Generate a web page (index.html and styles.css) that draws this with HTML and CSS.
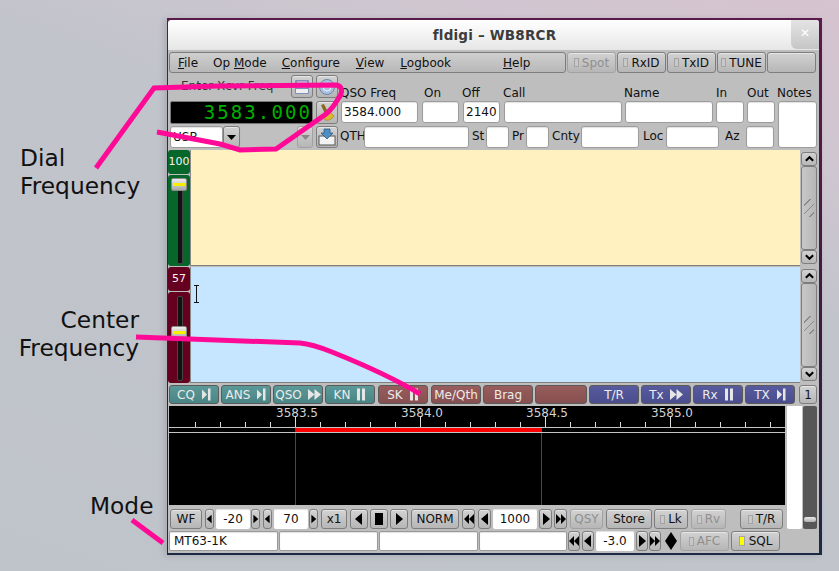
FILE: index.html
```html
<!DOCTYPE html>
<html lang="en">
<head>
    <meta charset="UTF-8">
    <meta name="viewport" content="width=device-width, initial-scale=1.0">
    <title>fldigi - WB8RCR</title>
    <link rel="stylesheet" href="styles.css">
</head>
<body>
    <svg class="defs" width="0" height="0">
        <symbol id="left" viewBox="0 0 10 12"><path d="M8 0v12L1 6z"/></symbol>
        <symbol id="right" viewBox="0 0 10 12"><path d="M2 0v12l7-6z"/></symbol>
        <symbol id="left2" viewBox="0 0 12 12"><path d="M6 0v12L0 6zM12 0v12L6 6z"/></symbol>
        <symbol id="right2" viewBox="0 0 12 12"><path d="M0 0v12l6-6zM6 0v12l6-6z"/></symbol>
        <symbol id="stop" viewBox="0 0 10 12"><path d="M1 0h8v12H1z"/></symbol>
        <symbol id="play-bar" viewBox="0 0 10 12"><path d="M1 1v10l5-5zM7 0h2.500v12H7z"/></symbol>
        <symbol id="play2" viewBox="0 0 12 12"><path d="M0 1v10l6-5zM6 1v10l6-5z"/></symbol>
        <symbol id="pause" viewBox="0 0 10 12"><path d="M1 0h3v12H1zM6 0h3v12H6z"/></symbol>
        <symbol id="up" viewBox="0 0 12 8"><path d="M2 6l4-4 4 4" fill="none" stroke="#000" stroke-width="2.200"/></symbol>
        <symbol id="down" viewBox="0 0 12 8"><path d="M2 2l4 4 4-4" fill="none" stroke="#000" stroke-width="2.200"/></symbol>
    </svg>

    <div class="label label-dial">Dial<br>Frequency</div>
    <div class="label label-center">Center<br>Frequency</div>
    <div class="label label-mode">Mode</div>

    <div class="window">
        <div class="titlebar">
            <span class="title">fldigi – WB8RCR</span>
            <div class="close">✕</div>
        </div>
        <div class="win-body">

            <div class="toolbar">
                <nav class="menu">
                    <span><u>F</u>ile</span>
                    <span>Op <u>M</u>ode</span>
                    <span><u>C</u>onfigure</span>
                    <span class="menu-view"><u>V</u>iew</span>
                    <span class="menu-log"><u>L</u>ogbook</span>
                    <span class="menu-help"><u>H</u>elp</span>
                </nav>
                <button class="btn tool off"><i class="led"></i>Spot</button>
                <button class="btn tool"><i class="led"></i>RxID</button>
                <button class="btn tool"><i class="led"></i>TxID</button>
                <button class="btn tool"><i class="led"></i>TUNE</button>
                <button class="btn tool"></button>
            </div>

            <div class="log">
                <div class="rig">
                    <div class="rig-row">
                        <span class="rig-label">Enter Xcvr Freq</span>
                        <button class="btn icon-btn">
                            <svg viewBox="0 0 18 18"><rect x="2" y="2" width="14" height="14" rx="1" fill="#7d8fb8"/><rect x="4" y="3" width="10" height="7" fill="#c9a3c8"/><rect x="3" y="11" width="12" height="4" fill="#eee"/></svg>
                        </button>
                        <button class="btn icon-btn">
                            <svg viewBox="0 0 18 18"><circle cx="9" cy="9" r="7.500" fill="#a9c1dd" stroke="#6f88aa"/><circle cx="9" cy="9" r="4" fill="none" stroke="#eef"/><path d="M2 9h14" stroke="#eef" fill="none"/></svg>
                        </button>
                    </div>
                    <div class="rig-row rig-freq">
                        <div class="freq">3583.000</div>
                        <button class="btn icon-btn">
                            <svg viewBox="0 0 18 18"><path d="M3 1l3-1 4 8-3 2z" fill="#8a6a20"/><path d="M6 11l5-4 5 5c-2 3-6 5-9 4z" fill="#e0b82c" stroke="#9a7a18" stroke-width=".6"/></svg>
                        </button>
                    </div>
                    <div class="rig-row rig-mode">
                        <input class="field mode-input" value="USB">
                        <button class="btn drop"><svg class="tri" viewBox="0 0 9 5"><path d="M0 0h9L4.500 5z"/></svg></button>
                        <div class="bw"></div>
                        <button class="btn drop small off"><svg class="tri" viewBox="0 0 9 5"><path d="M0 0h9L4.500 5z" fill="#888"/></svg></button>
                        <button class="btn icon-btn">
                            <svg viewBox="0 0 18 18"><rect x="1" y="8" width="16" height="9" fill="#f2f2f2" stroke="#555"/><path d="M6 1h6v4h3l-6 6-6-6h3z" fill="#4d8fc4" stroke="#26527a" stroke-width=".7"/></svg>
                        </button>
                    </div>
                </div>

                <div class="qso">
                    <div class="qso-fields">
                        <div class="row-labels">
                            <span class="w-qso">QSO Freq</span>
                            <span class="w-on lab-on">On</span>
                            <span class="w-off">Off</span>
                            <span class="w-call">Call</span>
                            <span class="w-name">Name</span>
                            <span class="w-in lab-in">In</span>
                            <span class="w-out lab-in">Out</span>
                        </div>
                        <div class="row-inputs">
                            <input class="field w-qso" value="3584.000">
                            <input class="field w-on">
                            <input class="field w-off" value="2140">
                            <input class="field w-call">
                            <input class="field w-name">
                            <input class="field w-in">
                            <input class="field w-out">
                        </div>
                        <div class="row-qth">
                            <label class="lab-qth">QTH</label><input class="field w-qth">
                            <label class="lab-st">St</label><input class="field w-st">
                            <label class="lab-pr">Pr</label><input class="field w-pr">
                            <label class="lab-cnty">Cnty</label><input class="field w-cnty">
                            <label class="lab-loc">Loc</label><input class="field w-loc">
                            <label class="lab-az">Az</label><input class="field w-out">
                        </div>
                    </div>
                    <div class="notes">
                        <span>Notes</span>
                        <textarea class="field notes-box"></textarea>
                    </div>
                </div>
            </div>

            <div class="panes">
                <div class="pane-row">
                    <div class="level green">
                        <div class="level-value">100</div>
                        <div class="level-slide"><div class="thumb thumb-tx"></div></div>
                    </div>
                    <div class="pane pane-rx"></div>
                    <div class="scrollbar">
                        <div class="sb-btn"><svg><use href="#up"/></svg></div>
                        <div class="sb-thumb"></div>
                        <div class="sb-btn"><svg><use href="#down"/></svg></div>
                    </div>
                </div>
                <div class="pane-row">
                    <div class="level maroon">
                        <div class="level-value">57</div>
                        <div class="level-slide"><div class="thumb thumb-rx"></div></div>
                    </div>
                    <div class="pane pane-tx">
                        <svg class="ibeam" width="7" height="18" viewBox="0 0 7 18"><path d="M1 .5h5M3.500.5v17M1 17.500h5" stroke="#111" fill="none"/></svg>
                    </div>
                    <div class="scrollbar">
                        <div class="sb-btn"><svg><use href="#up"/></svg></div>
                        <div class="sb-thumb"></div>
                        <div class="sb-btn"><svg><use href="#down"/></svg></div>
                    </div>
                </div>
            </div>

            <div class="macros">
                <button class="btn macro teal">CQ <svg><use href="#play-bar"/></svg></button>
                <button class="btn macro teal">ANS <svg><use href="#play-bar"/></svg></button>
                <button class="btn macro teal">QSO <svg class="wide"><use href="#play2"/></svg></button>
                <button class="btn macro teal">KN <svg><use href="#pause"/></svg></button>
                <button class="btn macro red sp">SK <svg><use href="#pause"/></svg></button>
                <button class="btn macro red sp">Me/Qth</button>
                <button class="btn macro red">Brag</button>
                <button class="btn macro red w-blank"></button>
                <button class="btn macro blue">T/R</button>
                <button class="btn macro blue">Tx <svg class="wide"><use href="#play2"/></svg></button>
                <button class="btn macro blue">Rx <svg><use href="#pause"/></svg></button>
                <button class="btn macro blue">TX <svg><use href="#play-bar"/></svg></button>
                <button class="btn macro-page">1</button>
            </div>

            <div class="lower">
                <div class="lower-main">
                    <div class="waterfall">
                        <svg width="616" height="99" viewBox="0 0 616 99">
                            <g class="scale-text">
                                <text x="128" y="11" text-anchor="middle">3583.5</text>
                                <text x="253" y="11" text-anchor="middle">3584.0</text>
                                <text x="378" y="11" text-anchor="middle">3584.5</text>
                                <text x="503" y="11" text-anchor="middle">3585.0</text>
                            </g>
                            <path d="M26.500 16v5M51.500 16v5M76.500 16v5M101.500 16v5M126.500 11v10M151.500 16v5M176.500 16v5M201.500 16v5M226.500 16v5M251.500 11v10M276.500 16v5M301.500 16v5M326.500 16v5M351.500 16v5M376.500 11v10M401.500 16v5M426.500 16v5M451.500 16v5M476.500 16v5M501.500 11v10M526.500 16v5M551.500 16v5M576.500 16v5M601.500 16v5" stroke="#ddd" fill="none"/>
                            <path d="M0 21.500h616M0 26.500h616" stroke="#c4c4c4" fill="none"/>
                            <rect x="126" y="22" width="247" height="4" fill="#f00"/>
                            <path d="M126.500 27v72M372.500 27v72" stroke="#a82020" fill="none"/>
                        </svg>
                    </div>
                    <div class="controls">
                        <button class="btn w-wf">WF</button>
                        <button class="btn arrow sp"><svg><use href="#left"/></svg></button>
                        <div class="value w-20">-20</div>
                        <button class="btn arrow tight"><svg><use href="#right"/></svg></button>
                        <button class="btn arrow sp"><svg><use href="#left"/></svg></button>
                        <div class="value w-20">70</div>
                        <button class="btn arrow tight"><svg><use href="#right"/></svg></button>
                        <button class="btn w-x1 sp">x1</button>
                        <button class="btn transport sp"><svg><use href="#left"/></svg></button>
                        <button class="btn transport"><svg><use href="#stop"/></svg></button>
                        <button class="btn transport"><svg><use href="#right"/></svg></button>
                        <button class="btn w-norm sp">NORM</button>
                        <button class="btn step sp"><svg><use href="#left2"/></svg></button>
                        <button class="btn step sp"><svg><use href="#left"/></svg></button>
                        <div class="value w-1000">1000</div>
                        <button class="btn step"><svg><use href="#right"/></svg></button>
                        <button class="btn step"><svg><use href="#right2"/></svg></button>
                        <button class="btn w-qsy sp off">QSY</button>
                        <button class="btn w-store sp">Store</button>
                        <button class="btn w-lk"><i class="led"></i>Lk</button>
                        <button class="btn w-rv off sp"><i class="led"></i>Rv</button>
                        <button class="btn w-tr"><i class="led"></i>T/R</button>
                    </div>
                </div>
                <div class="wf-white"></div>
                <div class="wf-slider"><div class="wf-thumb"></div></div>
            </div>

            <div class="status">
                <div class="cell w-mode">MT63-1K</div>
                <div class="cell w-c2"></div>
                <div class="cell w-c2"></div>
                <div class="cell w-c4"></div>
                <button class="btn step-s"><svg><use href="#left2"/></svg></button>
                <button class="btn step-s sp"><svg><use href="#left"/></svg></button>
                <div class="value w-snr">-3.0</div>
                <button class="btn step-s"><svg><use href="#right"/></svg></button>
                <button class="btn step-s"><svg><use href="#right2"/></svg></button>
                <svg class="diamond" width="14" height="20" viewBox="0 0 14 20"><path d="M7 1l6 9-6 9-6-9z" fill="#000"/></svg>
                <button class="btn w-afc off"><i class="led"></i>AFC</button>
                <button class="btn w-afc"><i class="led on"></i>SQL</button>
            </div>
        </div>
    </div>

    <svg class="marks" width="839" height="571" viewBox="0 0 839 571">
        <path d="M96 168L154 88 218 86 336 85C343 86 343 93 338 99 334 106 331 110 326 114L276 149 240 150 220 144 157 132" />
        <path d="M136 337L300 343C312 344 322 348 332 352 362 364 392 377 420 394" />
        <path d="M132 520L163 543" />
    </svg>
</body>
</html>
```

FILE: styles.css
```css
* {
    box-sizing: border-box;
    font-family: "DejaVu Sans", sans-serif;
}

body {
    margin: 0;
    width: 839px;
    height: 571px;
    overflow: hidden;
    position: relative;
    font-size: 12px;
    color: #111;
    background: linear-gradient(200deg, #d6c4d0 0%, #cfc6d0 18%, #c1c4cb 38%, #bfc3ca 100%);
}

.defs {
    position: absolute;
}

.label {
    position: absolute;
    font-size: 23.300px;
    line-height: 28px;
    color: #111;
}

.label-dial {
    left: 20px;
    top: 144px;
}

.label-center {
    left: 17px;
    top: 306px;
    width: 122px;
    text-align: right;
}

.label-mode {
    left: 90px;
    top: 492px;
}

.marks {
    position: absolute;
    left: 0;
    top: 0;
}

.marks path {
    fill: none;
    stroke: #fe0a96;
    stroke-width: 5;
}

/* window */
.window {
    position: absolute;
    left: 167px;
    top: 18px;
    width: 655px;
    padding: 2px 3px 2px 1px;
    background: linear-gradient(180deg, #5b1a4c 0%, #3c1a40 60%, #1c2a46 100%);
    box-shadow: -3px 1px 6px rgba(0, 0, 0, .12);
}

.titlebar {
    height: 30px;
    position: relative;
    display: flex;
    align-items: center;
    justify-content: center;
    background: linear-gradient(180deg, #fff, #e6e6e6);
    border-radius: 3px 3px 0 0;
}

.title {
    font-weight: bold;
    font-size: 13.500px;
    letter-spacing: .2px;
    color: #3c3c3c;
    padding-left: 2px;
}

.close {
    position: absolute;
    right: 0;
    top: 0;
    width: 28px;
    height: 29px;
    background: linear-gradient(180deg, #e4e4e4, #c6c6c6);
    border-radius: 0 3px 0 6px;
    color: #fff;
    font-size: 12px;
    font-weight: bold;
    text-align: center;
    line-height: 27px;
}

.win-body {
    background: #bebebe;
    padding: 2px 1px 2px 1px;
    height: 503px;
}

/* fltk looking buttons */
.btn {
    height: 100%;
    padding: 0;
    display: flex;
    align-items: center;
    justify-content: center;
    font-size: 12px;
    color: #111;
    border: 1px solid #7d7d7d;
    border-radius: 3px;
    background: linear-gradient(180deg, #d2d2d2, #b6b6b6);
    box-shadow: inset 0 1px 0 #e6e6e6;
    flex: none;
}

.btn svg {
    width: 8px;
    height: 12px;
}

.off {
    color: #8f8f8f;
    border-color: #a2a2a2;
}

.sp {
    margin-left: 1px;
}

.tight {
    margin-left: -1px;
}

.led {
    display: inline-block;
    width: 5px;
    height: 9px;
    margin-right: 3px;
    border: 1px solid #a4a4a4;
    background: #c8c8c8;
}

.led.on {
    background: #ff0;
    width: 6px;
    height: 10px;
    margin-right: 4px;
}

.toolbar {
    display: flex;
    gap: 1px;
    height: 21px;
}

.menu {
    width: 397px;
    display: flex;
    align-items: center;
    gap: 15px;
    padding-left: 8px;
    border: 1px solid #7d7d7d;
    border-radius: 3px;
    background: linear-gradient(180deg, #cfcfcf, #b8b8b8);
}

.menu-view {
    margin-left: 1px;
}

.menu-log {
    margin-left: 1px;
}

.menu-help {
    margin-left: 37px;
}

.tool {
    width: 49px;
}

/* log panel */
.log {
    display: flex;
    height: 74px;
    margin-top: 2px;
    margin-left: 1px;
    gap: 3px;
}

.rig {
    width: 168px;
}

.rig-row {
    display: flex;
    height: 23px;
    gap: 3px;
}

.rig-freq {
    margin-top: 3px;
}

.rig-mode {
    margin-top: 2px;
    height: 22px;
    gap: 0;
}

.rig-label {
    width: 118px;
    padding-left: 11px;
    line-height: 23px;
    color: #333;
}

.icon-btn {
    width: 22px;
}

.btn.icon-btn svg {
    width: 18px;
    height: 18px;
}

.freq {
    width: 143px;
    background: #000;
    border: 1px solid #777;
    border-radius: 2px;
    color: #00b000;
    font-family: "DejaVu Sans Mono", monospace;
    font-size: 19px;
    line-height: 21px;
    letter-spacing: 2.100px;
    text-align: right;
}

.field {
    display: block;
    height: 100%;
    margin: 0;
    padding: 0 2px;
    font-size: 12px;
    color: #111;
    background: #fff;
    border: 1px solid #9c9c9c;
    border-radius: 3px;
    box-shadow: inset 0 1px 1px #e2e2e2;
    resize: none;
    flex: none;
}

.mode-input {
    width: 53px;
}

.drop {
    width: 17px;
}

.btn svg.tri {
    width: 9px;
    height: 5px;
}

.bw {
    width: 57px;
    margin-left: 1px;
    background: #c0c0c0;
    border-radius: 2px;
}

.drop.small {
    width: 16px;
}

.rig-mode .icon-btn {
    margin-left: 3px;
}

.qso {
    display: flex;
    gap: 3px;
}

.qso-fields {
    width: 434px;
    padding-top: 10px;
}

.row-labels {
    display: flex;
    gap: 4px;
    height: 16px;
    line-height: 17px;
    margin-left: -1px;
}

.lab-on {
    padding-left: 3px;
}

.lab-in {
    padding-left: 1px;
}

.row-inputs {
    display: flex;
    gap: 4px;
    height: 22px;
}

.row-qth {
    display: flex;
    height: 22px;
    margin-top: 3px;
    line-height: 21px;
}

.row-qth label {
    flex: none;
}

.w-qso { width: 77px; flex: none; }
.w-on { width: 37px; flex: none; }
.w-off { width: 37px; flex: none; }
.w-call { width: 118px; flex: none; }
.w-name { width: 88px; flex: none; margin-left: -1px; }
.w-in { width: 28px; flex: none; margin-left: -1px; }
.w-out { width: 28px; flex: none; margin-left: -1px; }

.lab-qth { width: 24px; margin-left: -1px; margin-right: 0; }
.w-qth { width: 105px; }
.lab-st { width: 14px; margin-left: 3px; }
.w-st { width: 23px; }
.lab-pr { width: 15px; margin-left: 2px; padding-left: 1px; }
.w-pr { width: 23px; }
.lab-cnty { width: 30px; margin-left: 2px; padding-left: 1px; }
.w-cnty { width: 58px; }
.lab-loc { width: 24px; margin-left: 3px; padding-left: 1px; }
.w-loc { width: 53px; }
.lab-az { width: 21px; margin-left: 6px; }
.row-qth .w-out { margin-left: 0; }

.notes {
    width: 39px;
    padding-top: 10px;
    display: flex;
    flex-direction: column;
}

.notes span {
    height: 16px;
    line-height: 17px;
    margin-left: -1px;
    white-space: nowrap;
}

.notes-box {
    width: 39px;
    height: 47px;
}

/* text panes */
.panes {
    display: flex;
    flex-direction: column;
    gap: 1px;
    margin-top: 1px;
    margin-left: -1px;
}

.pane-row {
    display: flex;
    height: 116px;
}

.level {
    width: 22px;
    display: flex;
    flex-direction: column;
    gap: 1px;
}

.green { --level: #07672a; }
.maroon { --level: #650020; }

.level-value {
    height: 24px;
    background: var(--level);
    border-radius: 3px;
    color: #f2f2f2;
    font-size: 11px;
    text-align: center;
    line-height: 24px;
}

.level-slide {
    flex: 1;
    position: relative;
    background: var(--level);
    border-radius: 3px;
}

.level-slide::before {
    content: "";
    position: absolute;
    left: 9px;
    top: 4px;
    bottom: 2px;
    width: 4px;
    background: #111;
    border: 1px solid #444;
    border-radius: 2px;
}

.thumb {
    position: absolute;
    left: 3px;
    width: 16px;
    height: 13px;
    border-radius: 2px;
    background: linear-gradient(180deg, #ececec, #a8a8a8);
    border: 1px solid #8a8a8a;
}

.thumb::after {
    content: "";
    position: absolute;
    left: 1px;
    right: 1px;
    top: 4px;
    height: 3px;
    background: #f8f000;
}

.thumb-tx { top: 3px; }
.thumb-rx { top: 34px; }

.pane {
    width: 610px;
    flex: none;
    position: relative;
    border-left: 1px solid #8a8a8a;
    border-bottom: 1px solid #7e7e7e;
}

.pane-rx { background: #fff2c0; }
.pane-tx { background: #c5e6fe; }

.ibeam {
    position: absolute;
    left: 2px;
    top: 18px;
}

.scrollbar {
    width: 16px;
    margin: 2px 0 2px 1px;
    display: flex;
    flex-direction: column;
}

.sb-btn {
    height: 14px;
    background: linear-gradient(180deg, #d2d2d2, #b8b8b8);
    border: 1px solid #7d7d7d;
    border-radius: 3px;
    display: flex;
    align-items: center;
    justify-content: center;
    flex: none;
}

.sb-btn svg {
    width: 11px;
    height: 8px;
}

.sb-thumb {
    flex: 1;
    background:
        repeating-linear-gradient(135deg, transparent 0 4px, #8a8a8a 4px 5px, transparent 5px 6px) center / 10px 18px no-repeat,
        linear-gradient(90deg, #c8c8c8, #b6b6b6);
    border: 1px solid #7d7d7d;
    border-radius: 3px;
}

/* macro buttons */
.macros {
    display: flex;
    gap: 2px;
    height: 19px;
    margin-top: 2px;
}

.macro {
    width: 50px;
    color: #ececec;
    border-color: #5a5a5a;
    gap: 6px;
    box-shadow: none;
}

.btn.macro svg {
    width: 10px;
    height: 13px;
    fill: #e6e6e6;
}

.btn.macro svg.wide {
    width: 13px;
}

.teal { background: linear-gradient(180deg, #5b9898, #4a8585); }
.red { background: linear-gradient(180deg, #985c5c, #875050); }
.blue { background: linear-gradient(180deg, #575a9c, #4a4d8e); }

.w-blank {
    width: 52px;
}

.macro-page {
    width: 18px;
    margin-left: 2px;
}

/* waterfall */
.lower {
    display: flex;
    height: 123px;
    margin-top: 2px;
}

.lower-main {
    width: 616px;
    flex: none;
}

.waterfall {
    height: 99px;
    background: #000;
}

.waterfall svg {
    display: block;
}

.scale-text {
    font-family: "DejaVu Sans Mono", monospace;
    font-size: 12px;
    fill: #d4d4d4;
}

.controls {
    display: flex;
    gap: 2px;
    height: 20px;
    margin-top: 4px;
    padding-left: 1px;
}

.arrow { width: 9px; }
.transport { width: 18px; }
.step { width: 13px; }
.step-s { width: 12px; }

.btn.step svg, .btn.step-s svg {
    width: 10px;
}

.btn.transport svg {
    width: 10px;
    height: 14px;
}

.value {
    height: 100%;
    display: flex;
    align-items: center;
    justify-content: center;
    background: #fff;
    border-radius: 2px;
    flex: none;
    font-size: 12px;
    box-shadow: inset 0 1px 1px #e2e2e2;
}

.w-20 { width: 34px; }
.w-1000 { width: 44px; }
.w-snr { width: 38px; }
.w-wf { width: 32px; }
.w-x1 { width: 26px; }
.w-norm { width: 48px; }
.w-qsy { width: 33px; }
.w-store { width: 46px; }
.w-lk { width: 34px; }
.w-rv { width: 35px; }
.w-tr { width: 43px; margin-left: 12px; }

.wf-white {
    width: 15px;
    margin-left: 2px;
    background: #fff;
    border-radius: 0 0 2px 2px;
}

.wf-slider {
    width: 14px;
    margin-left: 1px;
    position: relative;
    background: #575757;
    border-radius: 2px;
}

.wf-thumb {
    position: absolute;
    left: 1px;
    right: 1px;
    top: 111px;
    height: 5px;
    border-radius: 2px;
    background: linear-gradient(180deg, #e8e8e8, #b0b0b0);
}

/* status row */
.status {
    display: flex;
    gap: 1px;
    height: 20px;
    margin-top: 2px;
}

.cell {
    height: 100%;
    background: #fff;
    border: 1px solid #999;
    border-radius: 2px;
    padding-left: 4px;
    line-height: 18px;
    flex: none;
    box-shadow: inset 0 1px 1px #e2e2e2;
}

.w-mode { width: 109px; }
.w-c2 { width: 99px; }
.w-c4 { width: 88px; }

.status .value {
    margin: 0 1px;
}

.diamond {
    flex: none;
    margin-left: 2px;
}

.w-afc {
    width: 49px;
}

.status .off {
    margin-left: 1px;
}

.w-afc + .w-afc {
    margin-left: 1px;
}
```
